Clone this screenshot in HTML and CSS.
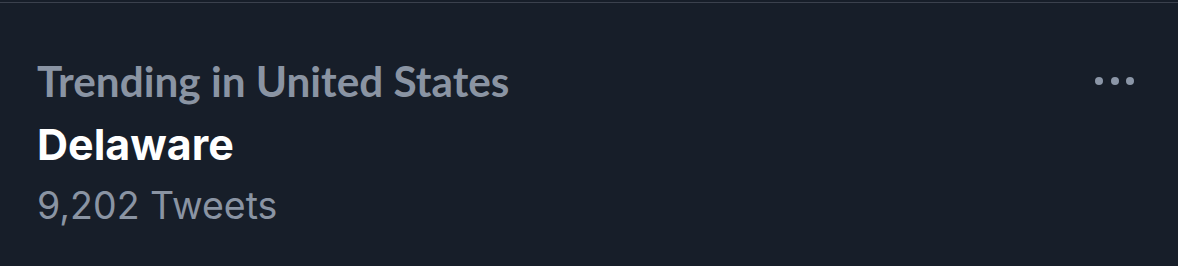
FILE: index.html
```html
<!DOCTYPE html>
<html>
<head>
<meta charset="utf-8">
<link rel="stylesheet" href="styles.css">
</head>
<body>
<div class="page">
  <div class="rule"></div>
  <div class="trend">
    <div class="info">
      <div class="context">Trending in United States</div>
      <div class="topic">Delaware</div>
      <div class="count">9,202 Tweets</div>
    </div>
    <div class="more" aria-label="More">
      <span class="dot"></span><span class="dot"></span><span class="dot"></span>
    </div>
  </div>
</div>
</body>
</html>
```
FILE: styles.css
```css
html, body {
  margin: 0;
  padding: 0;
  background: #171e29;
}
.page {
  width: 1178px;
  height: 266px;
  background: #171e29;
  padding-top: 2px;
  box-sizing: border-box;
  overflow: hidden;
}
.rule {
  height: 1px;
  background: #3b414d;
}
.trend {
  display: flex;
  justify-content: space-between;
  align-items: flex-start;
  padding: 53px 44px 0 37px;
}
.info {
  display: flex;
  flex-direction: column;
}
.context {
  font-family: Lato, "Liberation Sans", sans-serif;
  font-weight: 700;
  font-size: 42.3px;
  line-height: 50px;
  color: #8a94a3;
}
.topic {
  font-family: Inter, "Liberation Sans", Arial, sans-serif;
  font-weight: 700;
  font-size: 43px;
  line-height: 50px;
  margin-top: 13px;
  color: #ffffff;
}
.count {
  font-family: Inter, "Liberation Sans", Arial, sans-serif;
  font-weight: 400;
  font-size: 37.5px;
  line-height: 44px;
  margin-top: 15px;
  color: #8a94a3;
}
.more {
  display: flex;
  gap: 7.5px;
  margin-top: 21px;
}
.dot {
  width: 8px;
  height: 8px;
  border-radius: 50%;
  background: #8b96a7;
}
```
